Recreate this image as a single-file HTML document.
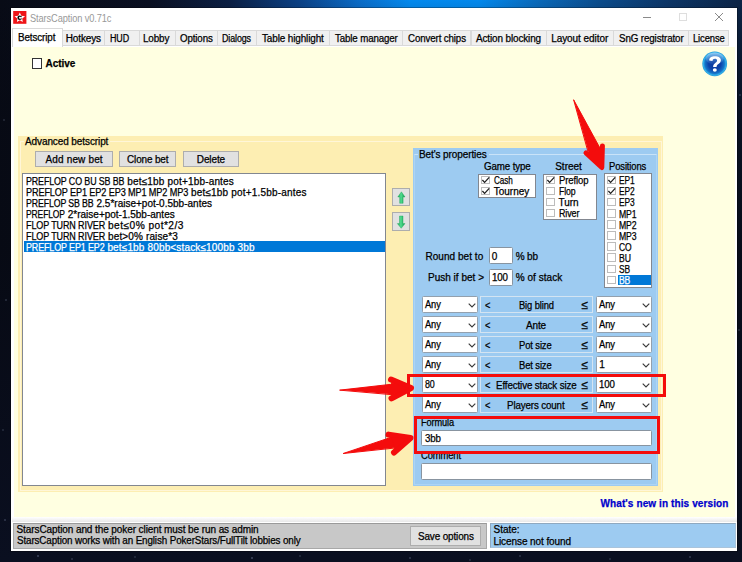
<!DOCTYPE html>
<html><head><meta charset="utf-8"><title>StarsCaption v0.71c</title>
<style>
html,body{margin:0;padding:0;}
body{width:742px;height:562px;overflow:hidden;position:relative;font-family:"Liberation Sans",sans-serif;
background:linear-gradient(90deg,#080b16 0px,#0a1022 150px,#0b1f44 230px,#0b4186 300px,#0a6cc8 360px,#0389ee 410px,#0388ec 480px,#0a68b8 540px,#0b4c8c 600px,#0c3566 670px,#0b2446 742px);
}
#dk{position:absolute;left:0;top:0;width:742px;height:562px;
 background:linear-gradient(180deg,rgba(7,10,20,0) 0px,rgba(7,10,20,0.05) 7px,rgba(7,10,20,0.35) 40px,rgba(7,10,20,0.7) 110px,rgba(7,10,20,0.9) 250px,#0a0f20 562px);}
div,span,svg{position:absolute;box-sizing:border-box;}
.t{-webkit-text-stroke:0.25px;white-space:nowrap;line-height:1;transform-origin:0 50%;font-family:"Liberation Sans",sans-serif;}
.btn{background:#e1e1e1;border:1px solid #adadad;}
.edit{background:#fff;border:1px solid #8894a0;border-radius:1.5px;}
.lst{background:#fff;border:1px solid #828790;}
.cb{background:#fff;border:1px solid #bcbcbc;}
.cbk{background:#fff;border:1px solid #333;}
.cmb{background:#fff;border:1px solid #93a0ad;border-radius:1.5px;}
.mid{background:#99c9f1;border:1px solid #d3e4f2;}
</style></head><body><div id="dk"></div>
<svg style="left:0;top:0" width="742" height="562" viewBox="0 0 742 562"><circle cx="38" cy="556" r="0.8" fill="#b8c4e8" opacity="0.5"/><circle cx="72" cy="559" r="0.8" fill="#b8c4e8" opacity="0.35"/><circle cx="135" cy="557" r="0.8" fill="#b8c4e8" opacity="0.3"/><circle cx="252" cy="558" r="0.8" fill="#b8c4e8" opacity="0.55"/><circle cx="300" cy="556" r="0.8" fill="#b8c4e8" opacity="0.3"/><circle cx="410" cy="558" r="0.8" fill="#b8c4e8" opacity="0.4"/><circle cx="470" cy="560" r="0.8" fill="#b8c4e8" opacity="0.3"/><circle cx="520" cy="556" r="0.8" fill="#b8c4e8" opacity="0.35"/><circle cx="610" cy="559" r="0.8" fill="#b8c4e8" opacity="0.3"/><circle cx="690" cy="557" r="0.8" fill="#b8c4e8" opacity="0.4"/><circle cx="4" cy="120" r="0.8" fill="#b8c4e8" opacity="0.3"/><circle cx="6" cy="300" r="0.8" fill="#b8c4e8" opacity="0.35"/><circle cx="3" cy="430" r="0.8" fill="#b8c4e8" opacity="0.3"/><circle cx="739" cy="330" r="0.8" fill="#b8c4e8" opacity="0.3"/><circle cx="740" cy="95" r="0.8" fill="#b8c4e8" opacity="0.35"/><circle cx="5" cy="520" r="0.8" fill="#b8c4e8" opacity="0.4"/></svg>
<div style="left:11px;top:7.8px;width:726.2px;height:543.2px;background:#fff;box-shadow:0 0 0 1px rgba(0,0,0,0.28);"></div>
<svg style="left:10px;top:8px" width="20" height="20" viewBox="10 8 20 20"><rect x="13.2" y="11" width="13.2" height="12.8" fill="#ee1418"/><polygon points="19.8,12.4 21.3,15.8 25.1,16.3 22.2,18.6 22.8,21.9 19.8,20.3 16.9,21.9 17.4,18.6 14.5,16.3 18.3,15.8" fill="#fff"/><circle cx="19.7" cy="17.8" r="2.3" fill="#0a0a0a"/><circle cx="20" cy="17.8" r="1.0" fill="#fff"/><rect x="20.2" y="17.1" width="2" height="1.3" fill="#fff"/></svg>
<span class="t" style="left:30.4px;top:13px;font-size:10.6px;color:#999;letter-spacing:-0.120px;transform:scaleX(0.8741);-webkit-text-stroke:0;">StarsCaption v0.71c</span><div style="left:643px;top:17px;width:8px;height:1px;background:#8a8a8a;"></div>
<div style="left:679px;top:13px;width:8px;height:8px;border:1px solid #dedede;"></div>
<svg style="left:714px;top:12px" width="10" height="10" viewBox="0 0 10 10"><path d="M1 1 L9 9 M9 1 L1 9" stroke="#8a8a8a" stroke-width="1" fill="none"/></svg>
<div style="left:14px;top:47px;width:720.5px;height:470.3px;background:#ffffe1;"></div>
<div style="left:62px;top:30px;width:43.3px;height:16px;background:#f0f0f0;border:1px solid #d9d9d9;"></div>
<span class="t" style="left:65.7px;top:34px;font-size:10px;color:#000;letter-spacing:-0.118px;">Hotkeys</span><div style="left:104.3px;top:30px;width:35.7px;height:16px;background:#f0f0f0;border:1px solid #d9d9d9;"></div>
<span class="t" style="left:110.3px;top:34px;font-size:10px;color:#000;letter-spacing:-0.120px;transform:scaleX(0.8915);">HUD</span><div style="left:139px;top:30px;width:37px;height:16px;background:#f0f0f0;border:1px solid #d9d9d9;"></div>
<span class="t" style="left:143.4px;top:34px;font-size:10px;color:#000;letter-spacing:-0.120px;transform:scaleX(0.9869);">Lobby</span><div style="left:175px;top:30px;width:42.5px;height:16px;background:#f0f0f0;border:1px solid #d9d9d9;"></div>
<span class="t" style="left:179.5px;top:34px;font-size:10px;color:#000;letter-spacing:-0.120px;transform:scaleX(0.9724);">Options</span><div style="left:216.5px;top:30px;width:40.7px;height:16px;background:#f0f0f0;border:1px solid #d9d9d9;"></div>
<span class="t" style="left:222.3px;top:34px;font-size:10px;color:#000;letter-spacing:-0.120px;transform:scaleX(0.8887);">Dialogs</span><div style="left:256.2px;top:30px;width:73.4px;height:16px;background:#f0f0f0;border:1px solid #d9d9d9;"></div>
<span class="t" style="left:261.9px;top:34px;font-size:10px;color:#000;letter-spacing:-0.120px;transform:scaleX(0.9930);">Table highlight</span><div style="left:328.6px;top:30px;width:74.8px;height:16px;background:#f0f0f0;border:1px solid #d9d9d9;"></div>
<span class="t" style="left:335px;top:34px;font-size:10px;color:#000;letter-spacing:-0.120px;transform:scaleX(0.9706);">Table manager</span><div style="left:402.4px;top:30px;width:69.1px;height:16px;background:#f0f0f0;border:1px solid #d9d9d9;"></div>
<span class="t" style="left:407.8px;top:34px;font-size:10px;color:#000;letter-spacing:-0.120px;transform:scaleX(0.9718);">Convert chips</span><div style="left:470.5px;top:30px;width:76.0px;height:16px;background:#f0f0f0;border:1px solid #d9d9d9;"></div>
<span class="t" style="left:476px;top:34px;font-size:10px;color:#000;letter-spacing:-0.120px;transform:scaleX(0.9929);">Action blocking</span><div style="left:545.5px;top:30px;width:68.7px;height:16px;background:#f0f0f0;border:1px solid #d9d9d9;"></div>
<span class="t" style="left:551.2px;top:34px;font-size:10px;color:#000;letter-spacing:-0.064px;">Layout editor</span><div style="left:613.2px;top:30px;width:75.8px;height:16px;background:#f0f0f0;border:1px solid #d9d9d9;"></div>
<span class="t" style="left:618.5px;top:34px;font-size:10px;color:#000;letter-spacing:-0.120px;transform:scaleX(0.9786);">SnG registrator</span><div style="left:688px;top:30px;width:41px;height:16px;background:#f0f0f0;border:1px solid #d9d9d9;"></div>
<span class="t" style="left:692.6px;top:34px;font-size:10px;color:#000;letter-spacing:-0.120px;transform:scaleX(0.9397);">License</span><div style="left:12px;top:28px;width:51px;height:19px;background:#fff;border:1px solid #d9d9d9;border-bottom:none;"></div>
<span class="t" style="left:18.3px;top:33px;font-size:10px;color:#000;letter-spacing:-0.120px;transform:scaleX(0.9861);">Betscript</span><div class="cbk" style="left:31.5px;top:58px;width:10.5px;height:10.5px;"></div>
<span class="t" style="left:45.5px;top:59px;font-size:10px;color:#000;font-weight:bold;letter-spacing:-0.053px;">Active</span><svg style="left:700px;top:49px" width="30" height="30" viewBox="700 49 30 30"><defs><radialGradient id="hg" cx="50%" cy="50%" r="50%"><stop offset="0" stop-color="#0c379a"/><stop offset="0.5" stop-color="#0d43aa"/><stop offset="0.78" stop-color="#1574c8"/><stop offset="0.92" stop-color="#32b2ea"/><stop offset="1" stop-color="#1f93d6"/></radialGradient><linearGradient id="hl" x1="0" y1="0" x2="0" y2="1"><stop offset="0" stop-color="#bfe4ff" stop-opacity="0.7"/><stop offset="1" stop-color="#6fb4f0" stop-opacity="0.05"/></linearGradient></defs><circle cx="714.7" cy="63.8" r="12.4" fill="url(#hg)"/><ellipse cx="714.7" cy="58.6" rx="9" ry="6" fill="url(#hl)"/><path d="M709.2 60.6 C709.2 57.6 711.6 56.3 714.9 56.3 C718.4 56.3 720.9 57.8 720.9 60.3 C720.9 62.4 719.4 63.3 718.1 64.2 C717 65 716.6 65.6 716.6 66.9 L713.1 66.9 C713.1 64.9 713.8 64.1 715 63.2 C716.2 62.3 717.1 61.7 717.1 60.5 C717.1 59.4 716.2 58.8 714.9 58.8 C713.5 58.8 712.6 59.5 712.5 60.9 Z" fill="#fff"/><ellipse cx="714.8" cy="70" rx="2" ry="1.8" fill="#fff"/></svg>
<div style="left:18.3px;top:135.7px;width:644.7px;height:356.3px;background:#fdeeb2;"></div>
<div style="left:19.6px;top:141px;width:642.4px;height:349.5px;border:1px solid #fff6d8;"></div>
<div style="left:23.5px;top:137px;width:86.5px;height:9px;background:#fdeeb2;"></div>
<span class="t" style="left:25px;top:137px;font-size:10px;color:#000;letter-spacing:-0.098px;">Advanced betscript</span><div class="btn" style="left:35px;top:151.2px;width:78px;height:15.7px;"></div>
<span class="t" style="left:45.5px;top:155px;font-size:10px;color:#000;letter-spacing:0.154px;">Add new bet</span><div class="btn" style="left:119px;top:151.2px;width:56.8px;height:15.7px;"></div>
<span class="t" style="left:127px;top:155px;font-size:10px;color:#000;letter-spacing:-0.120px;transform:scaleX(0.9920);">Clone bet</span><div class="btn" style="left:183.3px;top:151.2px;width:55.5px;height:15.7px;"></div>
<span class="t" style="left:196.8px;top:155px;font-size:10px;color:#000;letter-spacing:-0.118px;">Delete</span><div class="lst" style="left:22.3px;top:172.7px;width:363.7px;height:313.8px;"></div>
<div style="left:23.5px;top:240.9px;width:361.5px;height:11.0px;background:#0078d7;"></div>
<span class="t" style="left:25.7px;top:177px;font-size:10px;color:#000;letter-spacing:-0.120px;transform:scaleX(0.8872);">PREFLOP CO BU SB BB</span><span class="t" style="left:127.3px;top:177px;font-size:10px;color:#000;letter-spacing:0.172px;">bet≤1bb pot+1bb-antes</span><span class="t" style="left:25.7px;top:188px;font-size:10px;color:#000;letter-spacing:-0.120px;transform:scaleX(0.9115);">PREFLOP EP1 EP2 EP3 MP1 MP2 MP3</span><span class="t" style="left:191px;top:188px;font-size:10px;color:#000;letter-spacing:0.182px;">bet≤1bb pot+1.5bb-antes</span><span class="t" style="left:25.7px;top:199px;font-size:10px;color:#000;letter-spacing:-0.120px;transform:scaleX(0.8758);">PREFLOP SB BB</span><span class="t" style="left:96.5px;top:199px;font-size:10px;color:#000;letter-spacing:0.006px;">2.5*raise+pot-0.5bb-antes</span><span class="t" style="left:25.7px;top:210px;font-size:10px;color:#000;letter-spacing:-0.120px;transform:scaleX(0.8485);">PREFLOP</span><span class="t" style="left:67.8px;top:210px;font-size:10px;color:#000;letter-spacing:-0.006px;">2*raise+pot-1.5bb-antes</span><span class="t" style="left:25.7px;top:221px;font-size:10px;color:#000;letter-spacing:-0.120px;transform:scaleX(0.9003);">FLOP TURN RIVER</span><span class="t" style="left:108px;top:221px;font-size:10px;color:#000;letter-spacing:0.450px;transform:scaleX(1.0170);">bet≤0% pot*2/3</span><span class="t" style="left:25.7px;top:232px;font-size:10px;color:#000;letter-spacing:-0.120px;transform:scaleX(0.9003);">FLOP TURN RIVER</span><span class="t" style="left:108px;top:232px;font-size:10px;color:#000;letter-spacing:0.135px;">bet&gt;0% raise*3</span><span class="t" style="left:25.7px;top:243px;font-size:10px;color:#fff;letter-spacing:-0.120px;transform:scaleX(0.8914);">PREFLOP EP1 EP2</span><span class="t" style="left:107.4px;top:243px;font-size:10px;color:#fff;letter-spacing:0.155px;">bet≤1bb 80bb&lt;stack≤100bb 3bb</span><div class="btn" style="left:391.8px;top:188px;width:18.2px;height:18px;"></div>
<div class="btn" style="left:391.8px;top:212.3px;width:18.2px;height:18.5px;"></div>
<svg style="left:391px;top:186px" width="22" height="48" viewBox="391 186 22 48"><defs><linearGradient id="ga" x1="0" x2="1"><stop offset="0" stop-color="#16a653"/><stop offset="0.45" stop-color="#52dc90"/><stop offset="1" stop-color="#0f9a4a"/></linearGradient></defs><path d="M401.4 191.8 L405 197 L403.1 197 L403.1 203.3 L399.7 203.3 L399.7 197 L397.8 197 Z" fill="url(#ga)" stroke="#1aa556" stroke-width="0.4"/><path d="M401.2 228.3 L405 223.6 L403 223.6 L403 216 L399.5 216 L399.5 223.6 L397.4 223.6 Z" fill="url(#ga)" stroke="#1aa556" stroke-width="0.4"/></svg>
<div style="left:412.6px;top:148.3px;width:245.7px;height:338.2px;background:#9dcbf1;"></div>
<div style="left:414px;top:153.8px;width:243.3px;height:331.5px;border:1px solid #add4f4;border-top-color:#c9e3f8;"></div>
<div style="left:417.5px;top:149px;width:71.0px;height:10px;background:#9dcbf1;"></div>
<span class="t" style="left:419px;top:150px;font-size:10px;color:#000;letter-spacing:-0.098px;">Bet's properties</span><span class="t" style="left:484px;top:162px;font-size:10px;color:#000;letter-spacing:-0.120px;transform:scaleX(0.9740);">Game type</span><span class="t" style="left:555.2px;top:162px;font-size:10px;color:#000;letter-spacing:0.002px;">Street</span><span class="t" style="left:608.8px;top:162px;font-size:10px;color:#000;letter-spacing:-0.120px;transform:scaleX(0.9418);">Positions</span><div class="lst" style="left:478px;top:173.5px;width:57.7px;height:24.0px;"></div>
<div class="lst" style="left:543.3px;top:173.5px;width:53.5px;height:46.7px;"></div>
<div class="lst" style="left:604.2px;top:173px;width:48.0px;height:114.6px;"></div>
<div class="cb" style="left:481.3px;top:175.7px;width:8.8px;height:8.6px;"></div>
<svg style="left:481.3px;top:175.5px" width="10" height="9" viewBox="0 0 10 9"><path d="M1.4 4.0 L3.6 6.4 L8.2 1.4" stroke="#1c1c1c" stroke-width="1.25" fill="none"/></svg>
<span class="t" style="left:493.7px;top:176px;font-size:10px;color:#000;letter-spacing:-0.120px;transform:scaleX(0.8130);">Cash</span><div class="cb" style="left:481.3px;top:186.73px;width:8.8px;height:8.6px;"></div>
<svg style="left:481.3px;top:186.53px" width="10" height="9" viewBox="0 0 10 9"><path d="M1.4 4.0 L3.6 6.4 L8.2 1.4" stroke="#1c1c1c" stroke-width="1.25" fill="none"/></svg>
<span class="t" style="left:493.7px;top:187px;font-size:10px;color:#000;letter-spacing:0.003px;">Tourney</span><div class="cb" style="left:546.3px;top:175.7px;width:8.8px;height:8.6px;"></div>
<svg style="left:546.3px;top:175.5px" width="10" height="9" viewBox="0 0 10 9"><path d="M1.4 4.0 L3.6 6.4 L8.2 1.4" stroke="#1c1c1c" stroke-width="1.25" fill="none"/></svg>
<span class="t" style="left:558.5px;top:176px;font-size:10px;color:#000;letter-spacing:-0.120px;transform:scaleX(0.9498);">Preflop</span><div class="cb" style="left:546.3px;top:186.73px;width:8.8px;height:8.6px;"></div>
<span class="t" style="left:558.5px;top:187px;font-size:10px;color:#000;letter-spacing:-0.120px;transform:scaleX(0.8697);">Flop</span><div class="cb" style="left:546.3px;top:197.76px;width:8.8px;height:8.6px;"></div>
<span class="t" style="left:558.5px;top:198px;font-size:10px;color:#000;letter-spacing:-0.076px;">Turn</span><div class="cb" style="left:546.3px;top:208.79px;width:8.8px;height:8.6px;"></div>
<span class="t" style="left:558.5px;top:209px;font-size:10px;color:#000;letter-spacing:-0.120px;transform:scaleX(0.8926);">River</span><div style="left:617.8px;top:274.5px;width:33.2px;height:10.7px;background:#0078d7;"></div>
<div class="cb" style="left:607.3px;top:175.7px;width:8.8px;height:8.6px;"></div>
<svg style="left:607.3px;top:175.5px" width="10" height="9" viewBox="0 0 10 9"><path d="M1.4 4.0 L3.6 6.4 L8.2 1.4" stroke="#1c1c1c" stroke-width="1.25" fill="none"/></svg>
<span class="t" style="left:619.2px;top:176px;font-size:10px;color:#000;letter-spacing:-0.120px;transform:scaleX(0.8357);">EP1</span><div class="cb" style="left:607.3px;top:186.79999999999998px;width:8.8px;height:8.6px;"></div>
<svg style="left:607.3px;top:186.6px" width="10" height="9" viewBox="0 0 10 9"><path d="M1.4 4.0 L3.6 6.4 L8.2 1.4" stroke="#1c1c1c" stroke-width="1.25" fill="none"/></svg>
<span class="t" style="left:619.2px;top:187px;font-size:10px;color:#000;letter-spacing:-0.120px;transform:scaleX(0.8357);">EP2</span><div class="cb" style="left:607.3px;top:197.89999999999998px;width:8.8px;height:8.6px;"></div>
<span class="t" style="left:619.2px;top:198px;font-size:10px;color:#000;letter-spacing:-0.120px;transform:scaleX(0.8357);">EP3</span><div class="cb" style="left:607.3px;top:209.0px;width:8.8px;height:8.6px;"></div>
<span class="t" style="left:619.2px;top:210px;font-size:10px;color:#000;letter-spacing:-0.120px;transform:scaleX(0.8662);">MP1</span><div class="cb" style="left:607.3px;top:220.1px;width:8.8px;height:8.6px;"></div>
<span class="t" style="left:619.2px;top:221px;font-size:10px;color:#000;letter-spacing:-0.120px;transform:scaleX(0.8662);">MP2</span><div class="cb" style="left:607.3px;top:231.2px;width:8.8px;height:8.6px;"></div>
<span class="t" style="left:619.2px;top:232px;font-size:10px;color:#000;letter-spacing:-0.120px;transform:scaleX(0.8662);">MP3</span><div class="cb" style="left:607.3px;top:242.29999999999998px;width:8.8px;height:8.6px;"></div>
<span class="t" style="left:619.2px;top:243px;font-size:10px;color:#000;letter-spacing:-0.120px;transform:scaleX(0.8469);">CO</span><div class="cb" style="left:607.3px;top:253.39999999999998px;width:8.8px;height:8.6px;"></div>
<span class="t" style="left:619.2px;top:254px;font-size:10px;color:#000;letter-spacing:-0.120px;transform:scaleX(0.8634);">BU</span><div class="cb" style="left:607.3px;top:264.5px;width:8.8px;height:8.6px;"></div>
<span class="t" style="left:619.2px;top:265px;font-size:10px;color:#000;letter-spacing:-0.120px;transform:scaleX(0.8395);">SB</span><div class="cb" style="left:607.3px;top:275.59999999999997px;width:8.8px;height:8.6px;"></div>
<span class="t" style="left:619.2px;top:276px;font-size:10px;color:#fff;letter-spacing:-0.120px;transform:scaleX(0.8547);">BB</span><span class="t" style="left:425.4px;top:252px;font-size:10px;color:#000;letter-spacing:0.053px;">Round bet to</span><div class="edit" style="left:489px;top:247px;width:23.5px;height:17.2px;"></div>
<span class="t" style="left:491.7px;top:252px;font-size:10px;color:#000;">0</span><span class="t" style="left:515.7px;top:252px;font-size:10px;color:#000;letter-spacing:-0.120px;">% bb</span><span class="t" style="left:428px;top:273px;font-size:10px;color:#000;letter-spacing:0.010px;">Push if bet &gt;</span><div class="edit" style="left:489px;top:269px;width:23.5px;height:17.2px;"></div>
<span class="t" style="left:491.7px;top:273px;font-size:10px;color:#000;letter-spacing:-0.120px;transform:scaleX(0.9738);">100</span><span class="t" style="left:515.7px;top:273px;font-size:10px;color:#000;letter-spacing:0.046px;">% of stack</span><div class="cmb" style="left:422px;top:296px;width:55.5px;height:16.8px;"></div>
<span class="t" style="left:424.8px;top:300px;font-size:10px;color:#000;letter-spacing:-0.120px;transform:scaleX(0.9304);">Any</span><svg style="left:467.5px;top:302.5px" width="8" height="5" viewBox="0 0 8 5"><path d="M0.7 0.7 L4 4 L7.3 0.7" stroke="#3a3a3a" stroke-width="1.15" fill="none"/></svg>
<div class="mid" style="left:479.5px;top:296px;width:113.9px;height:16.8px;"></div>
<span class="t" style="left:485.3px;top:301px;font-size:10px;color:#000;letter-spacing:-0.120px;transform:scaleX(0.9260);">&lt;</span><span class="t" style="left:518.6px;top:301px;font-size:10px;color:#000;letter-spacing:-0.120px;transform:scaleX(0.9335);">Big blind</span><span class="t" style="left:581.5px;top:299px;font-size:12px;color:#000;letter-spacing:-0.094px;">≤</span><div class="cmb" style="left:596.4px;top:296px;width:56.1px;height:16.8px;"></div>
<span class="t" style="left:599.2px;top:300px;font-size:10px;color:#000;letter-spacing:-0.120px;transform:scaleX(0.9363);">Any</span><svg style="left:641.5px;top:302.5px" width="8" height="5" viewBox="0 0 8 5"><path d="M0.7 0.7 L4 4 L7.3 0.7" stroke="#3a3a3a" stroke-width="1.15" fill="none"/></svg>
<div class="cmb" style="left:422px;top:316px;width:55.5px;height:16.8px;"></div>
<span class="t" style="left:424.8px;top:320px;font-size:10px;color:#000;letter-spacing:-0.120px;transform:scaleX(0.9304);">Any</span><svg style="left:467.5px;top:322.5px" width="8" height="5" viewBox="0 0 8 5"><path d="M0.7 0.7 L4 4 L7.3 0.7" stroke="#3a3a3a" stroke-width="1.15" fill="none"/></svg>
<div class="mid" style="left:479.5px;top:316px;width:113.9px;height:16.8px;"></div>
<span class="t" style="left:485.3px;top:321px;font-size:10px;color:#000;letter-spacing:-0.120px;transform:scaleX(0.9260);">&lt;</span><span class="t" style="left:525.9px;top:321px;font-size:10px;color:#000;letter-spacing:-0.120px;">Ante</span><span class="t" style="left:581.5px;top:319px;font-size:12px;color:#000;letter-spacing:-0.094px;">≤</span><div class="cmb" style="left:596.4px;top:316px;width:56.1px;height:16.8px;"></div>
<span class="t" style="left:599.2px;top:320px;font-size:10px;color:#000;letter-spacing:-0.120px;transform:scaleX(0.9363);">Any</span><svg style="left:641.5px;top:322.5px" width="8" height="5" viewBox="0 0 8 5"><path d="M0.7 0.7 L4 4 L7.3 0.7" stroke="#3a3a3a" stroke-width="1.15" fill="none"/></svg>
<div class="cmb" style="left:422px;top:336px;width:55.5px;height:16.8px;"></div>
<span class="t" style="left:424.8px;top:340px;font-size:10px;color:#000;letter-spacing:-0.120px;transform:scaleX(0.9304);">Any</span><svg style="left:467.5px;top:342.5px" width="8" height="5" viewBox="0 0 8 5"><path d="M0.7 0.7 L4 4 L7.3 0.7" stroke="#3a3a3a" stroke-width="1.15" fill="none"/></svg>
<div class="mid" style="left:479.5px;top:336px;width:113.9px;height:16.8px;"></div>
<span class="t" style="left:485.3px;top:341px;font-size:10px;color:#000;letter-spacing:-0.120px;transform:scaleX(0.9260);">&lt;</span><span class="t" style="left:519.3px;top:341px;font-size:10px;color:#000;letter-spacing:-0.120px;transform:scaleX(0.9417);">Pot size</span><span class="t" style="left:581.5px;top:339px;font-size:12px;color:#000;letter-spacing:-0.094px;">≤</span><div class="cmb" style="left:596.4px;top:336px;width:56.1px;height:16.8px;"></div>
<span class="t" style="left:599.2px;top:340px;font-size:10px;color:#000;letter-spacing:-0.120px;transform:scaleX(0.9363);">Any</span><svg style="left:641.5px;top:342.5px" width="8" height="5" viewBox="0 0 8 5"><path d="M0.7 0.7 L4 4 L7.3 0.7" stroke="#3a3a3a" stroke-width="1.15" fill="none"/></svg>
<div class="cmb" style="left:422px;top:356px;width:55.5px;height:16.8px;"></div>
<span class="t" style="left:424.8px;top:360px;font-size:10px;color:#000;letter-spacing:-0.120px;transform:scaleX(0.9304);">Any</span><svg style="left:467.5px;top:362.5px" width="8" height="5" viewBox="0 0 8 5"><path d="M0.7 0.7 L4 4 L7.3 0.7" stroke="#3a3a3a" stroke-width="1.15" fill="none"/></svg>
<div class="mid" style="left:479.5px;top:356px;width:113.9px;height:16.8px;"></div>
<span class="t" style="left:485.3px;top:361px;font-size:10px;color:#000;letter-spacing:-0.120px;transform:scaleX(0.9260);">&lt;</span><span class="t" style="left:519.3px;top:361px;font-size:10px;color:#000;letter-spacing:-0.120px;transform:scaleX(0.9417);">Bet size</span><span class="t" style="left:581.5px;top:359px;font-size:12px;color:#000;letter-spacing:-0.094px;">≤</span><div class="cmb" style="left:596.4px;top:356px;width:56.1px;height:16.8px;"></div>
<span class="t" style="left:599.2px;top:360px;font-size:10px;color:#000;">1</span><svg style="left:641.5px;top:362.5px" width="8" height="5" viewBox="0 0 8 5"><path d="M0.7 0.7 L4 4 L7.3 0.7" stroke="#3a3a3a" stroke-width="1.15" fill="none"/></svg>
<div class="cmb" style="left:422px;top:376px;width:55.5px;height:16.8px;"></div>
<span class="t" style="left:424.8px;top:380px;font-size:10px;color:#000;letter-spacing:-0.120px;transform:scaleX(0.8911);">80</span><svg style="left:467.5px;top:382.5px" width="8" height="5" viewBox="0 0 8 5"><path d="M0.7 0.7 L4 4 L7.3 0.7" stroke="#3a3a3a" stroke-width="1.15" fill="none"/></svg>
<div class="mid" style="left:479.5px;top:376px;width:113.9px;height:16.8px;"></div>
<span class="t" style="left:485.3px;top:381px;font-size:10px;color:#000;letter-spacing:-0.120px;transform:scaleX(0.9260);">&lt;</span><span class="t" style="left:495.8px;top:381px;font-size:10px;color:#000;letter-spacing:-0.120px;transform:scaleX(0.9775);">Effective stack size</span><span class="t" style="left:581.5px;top:379px;font-size:12px;color:#000;letter-spacing:-0.094px;">≤</span><div class="cmb" style="left:596.4px;top:376px;width:56.1px;height:16.8px;"></div>
<span class="t" style="left:599.2px;top:380px;font-size:10px;color:#000;letter-spacing:-0.120px;transform:scaleX(0.9677);">100</span><svg style="left:641.5px;top:382.5px" width="8" height="5" viewBox="0 0 8 5"><path d="M0.7 0.7 L4 4 L7.3 0.7" stroke="#3a3a3a" stroke-width="1.15" fill="none"/></svg>
<div class="cmb" style="left:422px;top:396px;width:55.5px;height:16.8px;"></div>
<span class="t" style="left:424.8px;top:400px;font-size:10px;color:#000;letter-spacing:-0.120px;transform:scaleX(0.9304);">Any</span><svg style="left:467.5px;top:402.5px" width="8" height="5" viewBox="0 0 8 5"><path d="M0.7 0.7 L4 4 L7.3 0.7" stroke="#3a3a3a" stroke-width="1.15" fill="none"/></svg>
<div class="mid" style="left:479.5px;top:396px;width:113.9px;height:16.8px;"></div>
<span class="t" style="left:485.3px;top:401px;font-size:10px;color:#000;letter-spacing:-0.120px;transform:scaleX(0.9260);">&lt;</span><span class="t" style="left:507.4px;top:401px;font-size:10px;color:#000;letter-spacing:-0.120px;transform:scaleX(0.9740);">Players count</span><span class="t" style="left:581.5px;top:399px;font-size:12px;color:#000;letter-spacing:-0.094px;">≤</span><div class="cmb" style="left:596.4px;top:396px;width:56.1px;height:16.8px;"></div>
<span class="t" style="left:599.2px;top:400px;font-size:10px;color:#000;letter-spacing:-0.120px;transform:scaleX(0.9363);">Any</span><svg style="left:641.5px;top:402.5px" width="8" height="5" viewBox="0 0 8 5"><path d="M0.7 0.7 L4 4 L7.3 0.7" stroke="#3a3a3a" stroke-width="1.15" fill="none"/></svg>
<span class="t" style="left:421px;top:418px;font-size:10px;color:#000;letter-spacing:-0.120px;transform:scaleX(0.9206);">Formula</span><div class="edit" style="left:420.8px;top:429.5px;width:231.2px;height:16.5px;"></div>
<span class="t" style="left:424.5px;top:434px;font-size:10px;color:#000;letter-spacing:-0.120px;transform:scaleX(0.9738);">3bb</span><span class="t" style="left:421px;top:451px;font-size:10px;color:#000;letter-spacing:-0.120px;transform:scaleX(0.9407);">Comment</span><div class="edit" style="left:420.8px;top:463.2px;width:231.2px;height:17.2px;"></div>
<span class="t" style="left:600.5px;top:499px;font-size:10px;color:#0000cc;font-weight:bold;letter-spacing:0.108px;">What's new in this version</span><div style="left:12px;top:517.3px;width:724.5px;height:5.2px;background:linear-gradient(180deg,#fff,#e8e8e8);"></div>
<div style="left:13px;top:522.5px;width:474px;height:26.3px;background:#c8c8c8;border:1px solid #a8a8a8;border-top-color:#9a9a9a;"></div>
<div style="left:489.5px;top:522.5px;width:246.1px;height:25.7px;background:#9dcbf1;border:1px solid #a9c4dc;border-top-color:#8fa9c0;border-left-color:#8fa9c0;"></div>
<span class="t" style="left:16.5px;top:525px;font-size:10px;color:#000;letter-spacing:-0.089px;">StarsCaption and the poker client must be run as admin</span><span class="t" style="left:16.5px;top:536px;font-size:10px;color:#000;letter-spacing:-0.120px;transform:scaleX(0.9831);">StarsCaption works with an English PokerStars/FullTilt lobbies only</span><div class="btn" style="left:410.3px;top:526.3px;width:70.4px;height:19.5px;"></div>
<span class="t" style="left:417.6px;top:532px;font-size:10px;color:#000;letter-spacing:-0.120px;transform:scaleX(0.9896);">Save options</span><span class="t" style="left:493.5px;top:525px;font-size:10px;color:#000;letter-spacing:-0.023px;">State:</span><span class="t" style="left:493.5px;top:537px;font-size:10px;color:#000;letter-spacing:-0.085px;">License not found</span><div style="left:407px;top:373.5px;width:259px;height:23.5px;border:3.6px solid #f40c0c;"></div>
<div style="left:413.6px;top:415.5px;width:246.9px;height:38.0px;border:3.8px solid #f40c0c;"></div>
<svg style="left:0;top:0" width="742" height="562" viewBox="0 0 742 562"><g fill="#f40c0c" stroke="#f40c0c" stroke-linejoin="round" stroke-linecap="round"><path d="M340 390.1 L392 384.2 L392 394.3 Z" stroke-width="1"/><path d="M391 379.6 L411 388 L391.5 398.4" fill="none" stroke-width="6"/><path d="M392 383 L409 388 L392 395 Z" stroke-width="1"/><path d="M343.5 453.4 L392 437 L396 447.5 Z" stroke-width="1"/><path d="M388.5 434.6 L410.5 438 L394 452.5" fill="none" stroke-width="6"/><path d="M391 437 L408 438.5 L395 448.5 Z" stroke-width="1"/><path d="M573.8 100.1 L601 150 L589 154 Z" stroke-width="1"/><path d="M586 153 L601.8 167.5 L602.4 146" fill="none" stroke-width="5"/><path d="M589 153 L601 165 L601 149 Z" stroke-width="1"/></g></svg>
</body></html>
